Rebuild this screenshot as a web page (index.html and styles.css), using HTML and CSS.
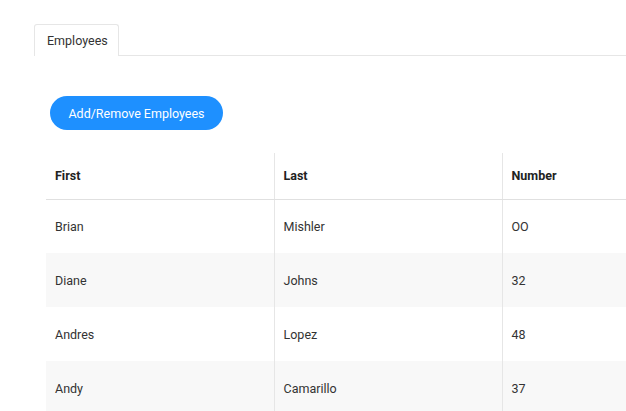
FILE: index.html
```html
<!DOCTYPE html>
<html>
<head>
<meta charset="utf-8">
<link rel="stylesheet" href="styles.css">
</head>
<body>
<div class="page">
  <div class="tabs">
    <div class="tab">Employees</div>
  </div>
  <div class="content">
    <button class="btn">Add/Remove Employees</button>
    <table class="grid">
      <colgroup><col class="c1"><col class="c2"><col class="c3"></colgroup>
      <thead>
        <tr><th>First</th><th>Last</th><th>Number</th></tr>
      </thead>
      <tbody>
        <tr><td>Brian</td><td>Mishler</td><td>OO</td></tr>
        <tr><td>Diane</td><td>Johns</td><td>32</td></tr>
        <tr><td>Andres</td><td>Lopez</td><td>48</td></tr>
        <tr><td>Andy</td><td>Camarillo</td><td>37</td></tr>
      </tbody>
    </table>
  </div>
</div>
</body>
</html>
```
FILE: styles.css
```css
html, body {
  margin: 0;
  padding: 0;
  background: #fff;
  overflow: hidden;
}
body {
  font-family: Roboto, "Liberation Sans", sans-serif;
  color: #333;
  font-size: 12.5px;
}
.page {
  padding-top: 24px;
}
.tabs {
  margin-left: 34px;
  border-bottom: 1px solid #e6e6e6;
  display: flex;
}
.tab {
  border: 1px solid #e6e6e6;
  border-bottom: none;
  border-radius: 3px 3px 0 0;
  padding: 0 12px;
  height: 31px;
  line-height: 31px;
  color: #333;
  margin-bottom: -1px;
  background: #fff;
  width: 59px;
}
.content {
  padding: 40px 0 0 46px;
}
.btn {
  margin-left: 4px;
  display: block;
  height: 34px;
  width: 173px;
  border: none;
  border-radius: 17px;
  background: #1e90ff;
  color: #fff;
  font-family: inherit;
  font-size: 12.5px;
  padding: 0;
}
.grid {
  margin-top: 23px;
  border-collapse: collapse;
  table-layout: fixed;
  width: 580px;
}
.c1, .c2 { width: 228px; }
.c3 { width: 124px; }
.grid th, .grid td {
  text-align: left;
  padding: 0 9px;
  box-sizing: border-box;
}
.grid th + th, .grid td + td {
  border-left: 1px solid #e6e6e6;
}
.grid th {
  height: 46px;
  font-weight: 700;
  color: #222;
  border-bottom: 1px solid #e0e0e0;
}
.grid td {
  height: 54px;
  color: #333;
}
.grid tbody tr:nth-child(even) td {
  background: #f8f8f8;
}
```
